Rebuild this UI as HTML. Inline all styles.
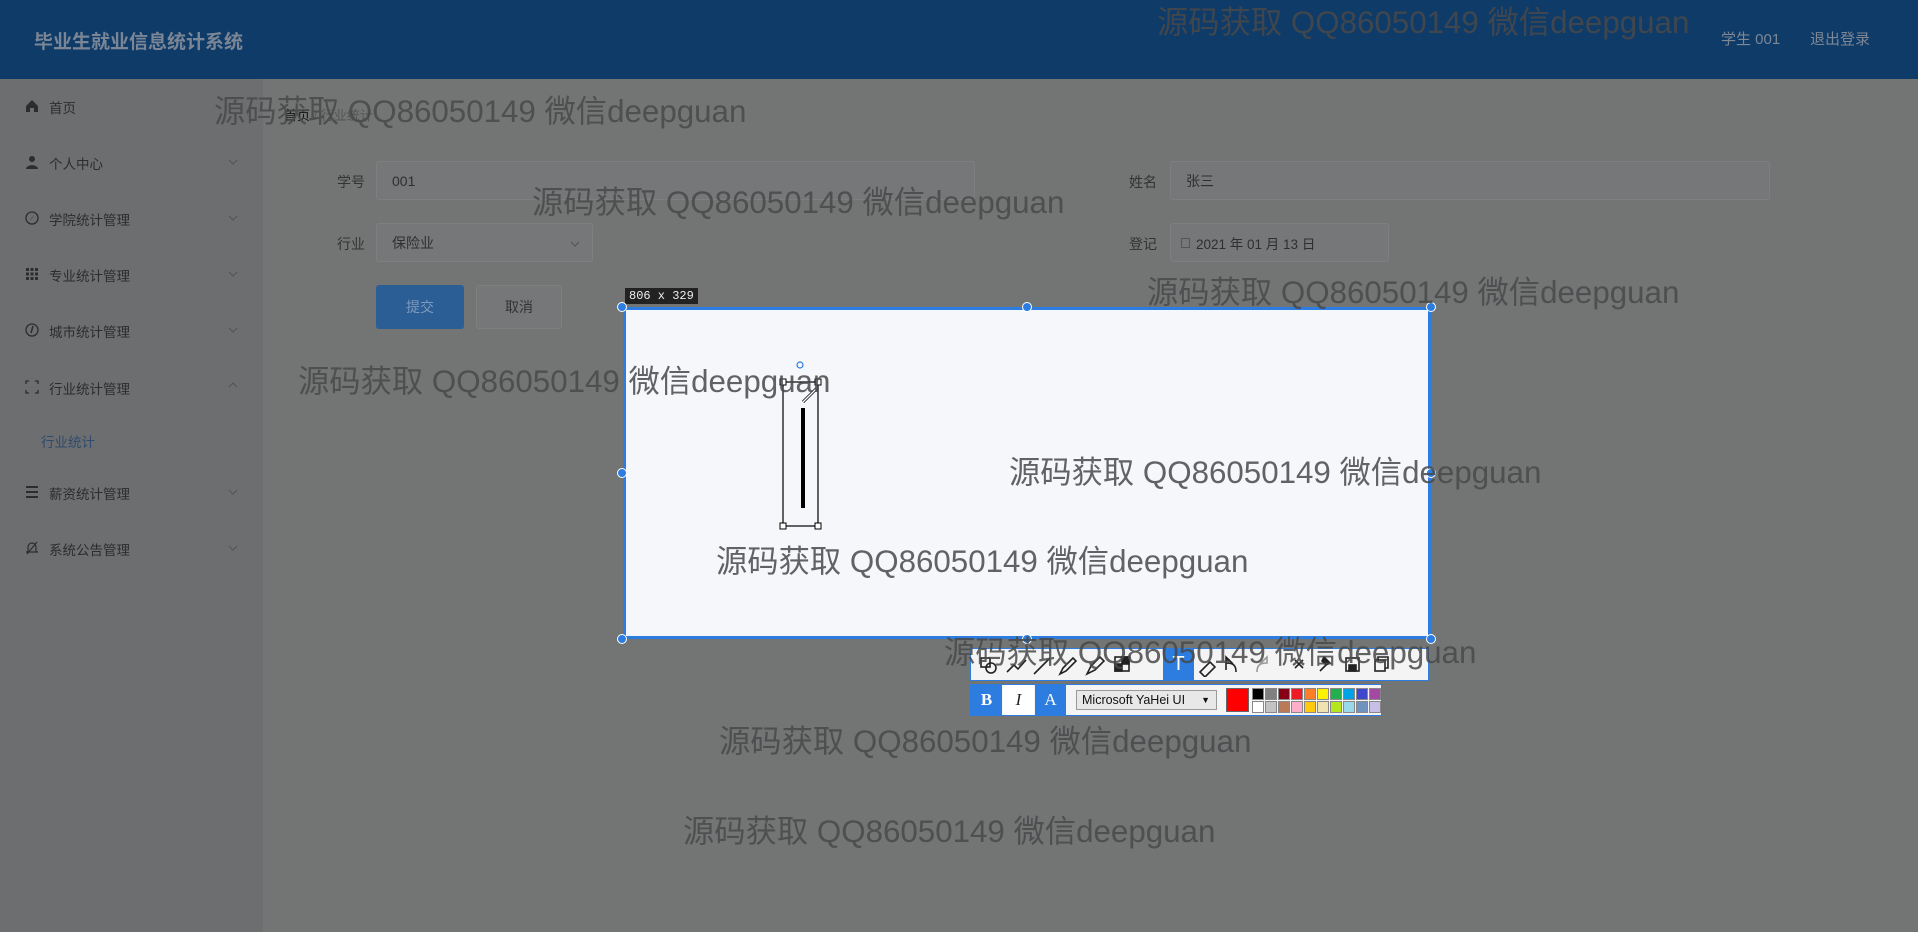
<!DOCTYPE html>
<html><head><meta charset="utf-8">
<style>
*{margin:0;padding:0;box-sizing:border-box}
body{width:1918px;height:932px;overflow:hidden;background:#737474;font-family:"Liberation Sans","Noto Sans CJK SC",sans-serif;position:relative}
.hdr{position:absolute;left:0;top:0;width:1918px;height:79px;background:#0f3b68}
.title{position:absolute;left:34px;top:27px;font-size:19px;font-weight:bold;color:#7a8695}
.hr{position:absolute;top:28px;font-size:15px;color:#7d8795}
.side{position:absolute;left:0;top:79px;width:263px;height:853px;background:#6d6e6f}
.mi{position:absolute;left:49px;font-size:13.5px;color:#2c2d2e}
.ic{position:absolute;left:25px;width:14px;height:14px}
.chev{position:absolute;left:228px;width:10px;height:6px}
.lbl{position:absolute;font-size:14px;color:#333}
.inp{position:absolute;border:1px solid #7e7f80;background:#767778;border-radius:3px;font-size:14px;color:#2e2f30;padding-left:15px;display:flex;align-items:center}
.wm{position:absolute;font-size:31.3px;color:#48494a;white-space:nowrap;font-family:"Liberation Sans","Noto Sans CJK SC",sans-serif;opacity:.85}
.sel{position:absolute;left:623px;top:307px;width:808px;height:332px;background:#f5f7fa;border:3px solid #2d7de0}
.h{position:absolute;width:10px;height:10px;border-radius:50%;background:#2d7de0;border:1.5px solid #fff}
.tb{position:absolute;background:#f4f4f4;border:1px solid #2d7de0}
.sw{position:absolute;width:12px;height:12px;border:1px solid #888}
</style></head><body>
<div class="hdr">
<div class="title">毕业生就业信息统计系统</div>
<div class="hr" style="left:1721px">学生 001</div>
<div class="hr" style="left:1810px">退出登录</div>
</div>
<div class="side">
<svg class="ic" style="top:20px" viewBox="0 0 14 14"><path d="M1 7L7 1l6 6v6H9V9H5v4H1z" fill="#2c2d2e"/></svg>
<div class="mi" style="top:18px">首页</div>
<svg class="ic" style="top:76px" viewBox="0 0 14 14"><circle cx="7" cy="4" r="3" fill="#2c2d2e"/><path d="M1 14c0-5 12-5 12 0z" fill="#2c2d2e"/></svg>
<div class="mi" style="top:74px">个人中心</div><svg class="chev" style="top:80px" viewBox="0 0 10 6"><path d="M1 1l4 4 4-4" fill="none" stroke="#555" stroke-width="1.2"/></svg>
<svg class="ic" style="top:132px" viewBox="0 0 14 14"><circle cx="7" cy="7" r="6" fill="none" stroke="#2c2d2e" stroke-width="1.3"/><path d="M9 4L6 8 5 10 8 6z" fill="#2c2d2e"/></svg>
<div class="mi" style="top:130px">学院统计管理</div><svg class="chev" style="top:136px" viewBox="0 0 10 6"><path d="M1 1l4 4 4-4" fill="none" stroke="#555" stroke-width="1.2"/></svg>
<svg class="ic" style="top:188px" viewBox="0 0 14 14"><path d="M1 1h3v3H1zM5.5 1h3v3h-3zM10 1h3v3h-3zM1 5.5h3v3H1zM5.5 5.5h3v3h-3zM10 5.5h3v3h-3zM1 10h3v3H1zM5.5 10h3v3h-3zM10 10h3v3h-3z" fill="#2c2d2e"/></svg>
<div class="mi" style="top:186px">专业统计管理</div><svg class="chev" style="top:192px" viewBox="0 0 10 6"><path d="M1 1l4 4 4-4" fill="none" stroke="#555" stroke-width="1.2"/></svg>
<svg class="ic" style="top:244px" viewBox="0 0 14 14"><circle cx="7" cy="7" r="6" fill="none" stroke="#2c2d2e" stroke-width="1.3"/><path d="M8 3L6 10" stroke="#2c2d2e" stroke-width="1.5"/></svg>
<div class="mi" style="top:242px">城市统计管理</div><svg class="chev" style="top:248px" viewBox="0 0 10 6"><path d="M1 1l4 4 4-4" fill="none" stroke="#555" stroke-width="1.2"/></svg>
<svg class="ic" style="top:301px" viewBox="0 0 14 14"><path d="M1 4V1h3M10 1h3v3M13 10v3h-3M4 13H1v-3" fill="none" stroke="#2c2d2e" stroke-width="1.3"/></svg>
<div class="mi" style="top:299px">行业统计管理</div><svg class="chev" style="top:303px" viewBox="0 0 10 6"><path d="M1 5l4-4 4 4" fill="none" stroke="#555" stroke-width="1.2"/></svg>
<div class="mi" style="top:352px;left:41px;color:#2f4a6e">行业统计</div>
<svg class="ic" style="top:406px" viewBox="0 0 14 14"><path d="M1 2h12M1 7h12M1 12h12" stroke="#2c2d2e" stroke-width="2"/></svg>
<div class="mi" style="top:404px">薪资统计管理</div><svg class="chev" style="top:410px" viewBox="0 0 10 6"><path d="M1 1l4 4 4-4" fill="none" stroke="#555" stroke-width="1.2"/></svg>
<svg class="ic" style="top:462px" viewBox="0 0 14 14"><path d="M3 11V6a4 4 0 018 0v5zM1 11h12M12 1L2 13" fill="none" stroke="#2c2d2e" stroke-width="1.2"/></svg>
<div class="mi" style="top:460px">系统公告管理</div><svg class="chev" style="top:466px" viewBox="0 0 10 6"><path d="M1 1l4 4 4-4" fill="none" stroke="#555" stroke-width="1.2"/></svg>
</div>

<div style="position:absolute;left:284px;top:105px;font-size:13px;color:#111">首页 <span style="color:#555">/ 行业统计</span></div>

<div class="lbl" style="left:337px;top:172px">学号</div>
<div class="inp" style="left:376px;top:161px;width:599px;height:39px">001</div>
<div class="lbl" style="left:1129px;top:172px">姓名</div>
<div class="inp" style="left:1170px;top:161px;width:600px;height:39px">张三</div>
<div class="lbl" style="left:337px;top:234px">行业</div>
<div class="inp" style="left:376px;top:223px;width:217px;height:39px">保险业<svg style="position:absolute;right:12px;top:17px" width="10" height="6" viewBox="0 0 10 6"><path d="M1 1l4 4 4-4" fill="none" stroke="#555" stroke-width="1.2"/></svg></div>
<div class="lbl" style="left:1129px;top:234px">登记</div>
<div class="inp" style="left:1170px;top:223px;width:219px;height:39px;padding-left:10px;font-size:13.5px"><span style="display:inline-block;width:9px;height:10px;border:1px solid #555;margin-right:6px"></span>2021 年 01 月 13 日</div>
<div style="position:absolute;left:376px;top:285px;width:88px;height:44px;background:#2b5e95;border-radius:3px;color:#7e99bb;font-size:14px;text-align:center;line-height:44px">提交</div>
<div style="position:absolute;left:476px;top:285px;width:86px;height:44px;background:#767778;border:1px solid #7e7f80;border-radius:3px;color:#333;font-size:14px;text-align:center;line-height:42px">取消</div>

<div class="sel"></div>
<div style="position:absolute;left:625px;top:288px;background:#222;color:#eee;font-family:'Liberation Mono',monospace;font-size:12px;padding:1px 4px">806 x 329</div>
<div class="h" style="left:617px;top:302px"></div><div class="h" style="left:1022px;top:302px"></div><div class="h" style="left:1426px;top:302px"></div>
<div class="h" style="left:617px;top:468px"></div><div class="h" style="left:1426px;top:468px"></div>
<div class="h" style="left:617px;top:634px"></div><div class="h" style="left:1022px;top:634px"></div><div class="h" style="left:1426px;top:634px"></div>
<svg style="position:absolute;left:775px;top:360px" width="60" height="175" viewBox="0 0 60 175">
<rect x="8" y="22" width="35" height="144" fill="none" stroke="#000" stroke-width="1.2"/>
<rect x="5" y="19" width="6" height="6" fill="#fff" stroke="#000"/><rect x="40" y="19" width="6" height="6" fill="#fff" stroke="#000"/>
<rect x="5" y="163" width="6" height="6" fill="#fff" stroke="#000"/><rect x="40" y="163" width="6" height="6" fill="#fff" stroke="#000"/>
<rect x="26" y="48" width="4" height="100" fill="#000"/>
<path d="M28 42L42 28" stroke="#000" stroke-width="3"/><path d="M28 42L42 28" stroke="#fff" stroke-width="1.4"/>
<circle cx="25" cy="5" r="3" fill="none" stroke="#2d7de0" stroke-width="1.2"/>
</svg>

<div class="tb" style="left:970px;top:648px;width:459px;height:33px"></div>
<div style="position:absolute;left:1163px;top:648px;width:31px;height:33px;background:#2d7de0;color:#fff;font-size:20px;text-align:center;line-height:33px">T</div>
<svg style="position:absolute;left:975px;top:652px" width="450" height="25" viewBox="0 0 450 25" fill="none" stroke="#222" stroke-width="1.6">
<rect x="6" y="6" width="9" height="9"/><circle cx="16" cy="16" r="5"/>
<path d="M32 20l7-7 4 4 8-9"/>
<path d="M59 22L75 6"/><path d="M85 22l3-6 10-10 3 3-10 10z"/>
<path d="M112 22l4-8 9-9 4 4-9 9z"/>
<rect x="140" y="5" width="14" height="14"/><rect x="147" y="5" width="7" height="7" fill="#222"/><rect x="140" y="12" width="7" height="7" fill="#222"/>
<path d="M225 20l10-10 5 5-10 10z"/>
<path d="M255 8h-4v10M258 12l-7-7v6c8 0 10 3 10 9"/>
<path d="M285 12l7-7v6c-8 0-10 3-10 9" stroke="#999"/>
<path d="M320 8l8 8M328 8l-8 8"/>
<path d="M345 19l6-6M349 5l6 6-4 2-4-4z" fill="#222"/>
<rect x="371" y="6" width="13" height="13"/><rect x="374" y="13" width="7" height="6" fill="#222"/>
<rect x="400" y="8" width="10" height="11"/><path d="M403 8V5h10v11h-3"/>
</svg>
<div class="tb" style="left:970px;top:684px;width:412px;height:32px"></div>
<div style="position:absolute;left:971px;top:685px;width:31px;height:30px;background:#2d7de0;color:#fff;font:bold 17px 'Liberation Serif',serif;text-align:center;line-height:30px">B</div>
<div style="position:absolute;left:1003px;top:685px;width:31px;height:30px;background:#fff;color:#222;font:italic 17px 'Liberation Serif',serif;text-align:center;line-height:30px">I</div>
<div style="position:absolute;left:1035px;top:685px;width:31px;height:30px;background:#2d7de0;color:#fff;font:17px 'Liberation Serif',serif;text-align:center;line-height:30px">A</div>
<div style="position:absolute;left:1076px;top:690px;width:141px;height:20px;background:#e8e8e8;border:1px solid #999;font-size:12.5px;color:#111;padding-left:5px;line-height:18px">Microsoft YaHei UI <span style="position:absolute;right:6px;font-size:9px">▼</span></div>
<div style="position:absolute;left:1226px;top:688px;width:23px;height:24px;background:#f00;border:1px solid #666"></div>
<div class="sw" style="left:1252px;top:688px;background:#000"></div><div class="sw" style="left:1265px;top:688px;background:#808080"></div><div class="sw" style="left:1278px;top:688px;background:#880015"></div><div class="sw" style="left:1291px;top:688px;background:#ed1c24"></div><div class="sw" style="left:1304px;top:688px;background:#ff7f27"></div><div class="sw" style="left:1317px;top:688px;background:#fff200"></div><div class="sw" style="left:1330px;top:688px;background:#22b14c"></div><div class="sw" style="left:1343px;top:688px;background:#00a2e8"></div><div class="sw" style="left:1356px;top:688px;background:#3f48cc"></div><div class="sw" style="left:1369px;top:688px;background:#a349a4"></div>
<div class="sw" style="left:1252px;top:701px;background:#fff"></div><div class="sw" style="left:1265px;top:701px;background:#c3c3c3"></div><div class="sw" style="left:1278px;top:701px;background:#b97a57"></div><div class="sw" style="left:1291px;top:701px;background:#ffaec9"></div><div class="sw" style="left:1304px;top:701px;background:#ffc90e"></div><div class="sw" style="left:1317px;top:701px;background:#efe4b0"></div><div class="sw" style="left:1330px;top:701px;background:#b5e61d"></div><div class="sw" style="left:1343px;top:701px;background:#99d9ea"></div><div class="sw" style="left:1356px;top:701px;background:#7092be"></div><div class="sw" style="left:1369px;top:701px;background:#c8bfe7"></div>

<div class="wm" style="left:1157px;top:-2px">源码获取 QQ86050149 微信deepguan</div>
<div class="wm" style="left:214px;top:87px">源码获取 QQ86050149 微信deepguan</div>
<div class="wm" style="left:532px;top:178px">源码获取 QQ86050149 微信deepguan</div>
<div class="wm" style="left:1147px;top:268px">源码获取 QQ86050149 微信deepguan</div>
<div class="wm" style="left:298px;top:357px">源码获取 QQ86050149 微信deepguan</div>
<div class="wm" style="left:1009px;top:448px">源码获取 QQ86050149 微信deepguan</div>
<div class="wm" style="left:716px;top:537px">源码获取 QQ86050149 微信deepguan</div>
<div class="wm" style="left:944px;top:628px">源码获取 QQ86050149 微信deepguan</div>
<div class="wm" style="left:719px;top:717px">源码获取 QQ86050149 微信deepguan</div>
<div class="wm" style="left:683px;top:807px">源码获取 QQ86050149 微信deepguan</div>
</body></html>
